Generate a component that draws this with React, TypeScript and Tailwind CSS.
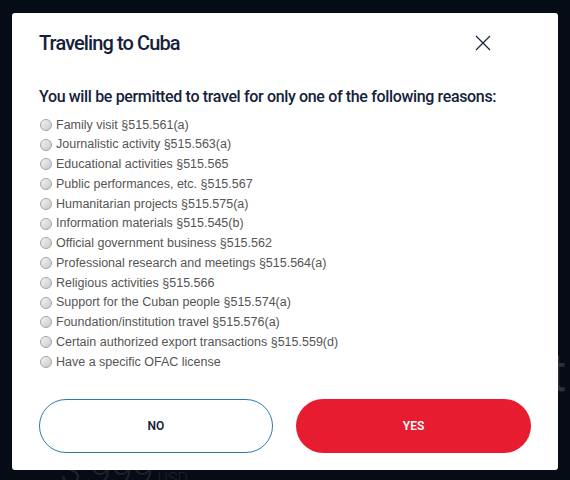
import React, { useState } from 'react';

const reasons = [
  'Family visit §515.561(a)',
  'Journalistic activity §515.563(a)',
  'Educational activities §515.565',
  'Public performances, etc. §515.567',
  'Humanitarian projects §515.575(a)',
  'Information materials §515.545(b)',
  'Official government business §515.562',
  'Professional research and meetings §515.564(a)',
  'Religious activities §515.566',
  'Support for the Cuban people §515.574(a)',
  'Foundation/institution travel §515.576(a)',
  'Certain authorized export transactions §515.559(d)',
  'Have a specific OFAC license',
];

export default function App() {
  const [selected, setSelected] = useState('');

  return (
    <div className="relative w-[570px] h-[480px] overflow-hidden bg-[#050c15]">
      {/* faint page content behind the overlay */}
      <div className="absolute left-[549px] top-[346px] text-[54px] leading-none text-[#2c3138] font-['Roboto',sans-serif]">t</div>
      <div className="absolute left-[60px] top-[452px] text-[38px] leading-none text-[#1d232b] font-['Roboto',sans-serif] font-light">
        $ 999<span className="text-[16px] ml-1">USD</span>
      </div>

      <div className="absolute left-[12px] top-[13px] w-[546px] h-[457px] bg-white rounded-[3px] px-[27px] pt-[16px] font-['Roboto',sans-serif]">
        <div className="flex items-start justify-between">
          <h1 className="text-[20px] leading-[28px] font-medium text-[#15213a] tracking-[-0.9px]">Traveling to Cuba</h1>
          <button className="mt-[6px] mr-[40px] text-[#15213a]">
            <svg width="16" height="16" viewBox="0 0 16 16" fill="none" stroke="currentColor" strokeWidth="1.2">
              <path d="M1 1 L15 15 M15 1 L1 15" />
            </svg>
          </button>
        </div>

        <p className="mt-[30px] text-[16px] leading-[20px] font-medium text-[#15213a] tracking-[-0.35px] whitespace-nowrap">
          You will be permitted to travel for only one of the following reasons:
        </p>

        <div className="mt-[8px] flex flex-col font-['Liberation_Sans',Arial,sans-serif] text-[12.5px] text-[#555]">
          {reasons.map((r) => (
            <label key={r} className="flex items-center h-[19.75px] gap-[4px]">
              <input
                type="radio"
                name="reason"
                checked={selected === r}
                onChange={() => setSelected(r)}
                className="appearance-none w-[12px] h-[12px] m-0 ml-[1px] rounded-full border border-[#a4a4a4] bg-gradient-to-br from-[#f4f4f4] to-[#c9c9c9] checked:bg-[#666]"
              />
              <span>{r}</span>
            </label>
          ))}
        </div>

        <div className="mt-[27px] flex gap-[23px]">
          <button className="w-[234px] h-[54px] rounded-full border border-[#2b7bb0] text-[12px] font-semibold text-[#15213a]">
            NO
          </button>
          <button className="w-[235px] h-[54px] rounded-full bg-[#e81c30] text-[12px] font-semibold text-white">
            YES
          </button>
        </div>
      </div>
    </div>
  );
}
